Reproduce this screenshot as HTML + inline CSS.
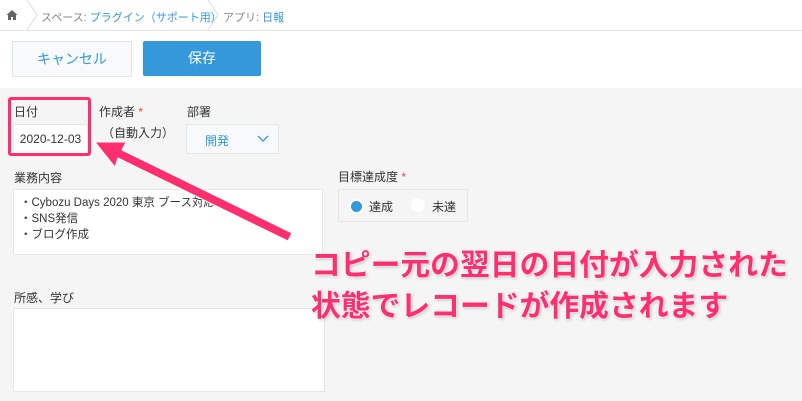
<!DOCTYPE html>
<html><head><meta charset="utf-8"><style>
body{margin:0;width:802px;height:401px;overflow:hidden;font-family:"Liberation Sans","Noto Sans CJK JP",sans-serif;background:#f5f5f5;position:relative;color:#333}
.abs{position:absolute}
.top{left:0;top:0;width:802px;height:30px;background:#fff;border-bottom:1px solid #e3e3e3;font-size:11px;color:#888}
.btnbar{left:0;top:31px;width:802px;height:57px;background:#fff}
.lbl{font-size:12px;color:#333}
.box{background:#fff;border:1px solid #e3e7e8}
.star{color:#e74c3c}
.big{font-size:29.8px;font-weight:bold;color:#ff2e6e;letter-spacing:0;white-space:nowrap;text-shadow:0 0 2px #fff,0 0 2px #fff,1px 1px 3px rgba(0,0,0,.3)}
</style></head><body>
<div class="abs top">
 <svg class="abs" style="left:6px;top:9px" width="12" height="12" viewBox="0 0 12 12"><path d="M6 1L0.5 6H2v5h3V8h2v3h3V6h1.5z" fill="#666"/></svg>
 <svg class="abs" style="left:26px;top:0" width="12" height="30"><path d="M1 0L11 15L1 30" stroke="#ddd" fill="none"/></svg>
 <div class="abs" style="left:41px;top:9px">スペース: <span style="color:#3498db">プラグイン（サポート用）</span></div>
 <svg class="abs" style="left:207px;top:0" width="12" height="30"><path d="M1 0L11 15L1 30" stroke="#ddd" fill="none"/></svg>
 <div class="abs" style="left:223px;top:9px">アプリ: <span style="color:#3498db">日報</span></div>
</div>
<div class="abs btnbar"></div>
<div class="abs" style="left:12px;top:41px;width:118px;height:34px;background:#f7f9fa;border:1px solid #e3e7e8;color:#3498db;font-size:14px;text-align:center;line-height:34px">キャンセル</div>
<div class="abs" style="left:143px;top:41px;width:118px;height:35px;background:#3498db;border-radius:2px;color:#fff;font-size:14px;text-align:center;line-height:35px">保存</div>

<div class="abs lbl" style="left:14px;top:103px">日付</div>
<div class="abs box" style="left:13px;top:124px;width:73px;height:28px;font-size:12px;line-height:28px;text-align:center">2020-12-03</div>
<div class="abs" style="left:8px;top:97px;width:83px;height:59px;border:3px solid #ff2e6e;border-radius:3px;box-sizing:border-box"></div>
<div class="abs lbl" style="left:99px;top:103px">作成者 <span class="star">*</span></div>
<div class="abs lbl" style="left:102px;top:124px;font-size:12px">（自動入力）</div>
<div class="abs lbl" style="left:187px;top:103px">部署</div>
<div class="abs box" style="left:186px;top:124px;width:91px;height:28px;background:#f7f9fa"><span class="abs" style="left:18px;top:7px;font-size:12px;color:#3498db">開発</span>
<svg class="abs" style="left:70px;top:10px" width="12" height="8"><path d="M1 1L6 6L11 1" stroke="#3498db" fill="none" stroke-width="1.3"/></svg></div>

<div class="abs lbl" style="left:14px;top:169px">業務内容</div>
<div class="abs box" style="left:13px;top:189px;width:310px;height:66px;font-size:11.5px;line-height:16px;padding:5px 0 0 6px;box-sizing:border-box">・Cybozu Days 2020 東京 ブース対応<br>・SNS発信<br>・ブログ作成</div>
<div class="abs lbl" style="left:338px;top:168px">目標達成度 <span class="star">*</span></div>
<div class="abs box" style="left:338px;top:189px;width:128px;height:31px;background:#f5f5f5">
 <div class="abs" style="left:10px;top:9px;width:11px;height:11px;border-radius:50%;background:#3498db;border:2px solid #fff"></div>
 <span class="abs" style="left:30px;top:8px;font-size:12px">達成</span>
 <div class="abs" style="left:72px;top:8px;width:14px;height:14px;border-radius:50%;background:#fff"></div>
 <span class="abs" style="left:93px;top:8px;font-size:12px">未達</span>
</div>
<div class="abs lbl" style="left:14px;top:289px">所感、学び</div>
<div class="abs box" style="left:13px;top:308px;width:310px;height:82px"></div>

<svg class="abs" style="left:0;top:0" width="802" height="401"><g fill="#ff2e6e" stroke="#fff" stroke-width="1"><path d="M292 233L122 150L126 142L95 142L115 167L118 158L288 241Z"/></g></svg>
<div class="abs big" style="left:311px;top:240px">コピー元の翌日の日付が入力された</div>
<div class="abs big" style="left:311px;top:281px">状態でレコードが作成されます</div>
</body></html>
